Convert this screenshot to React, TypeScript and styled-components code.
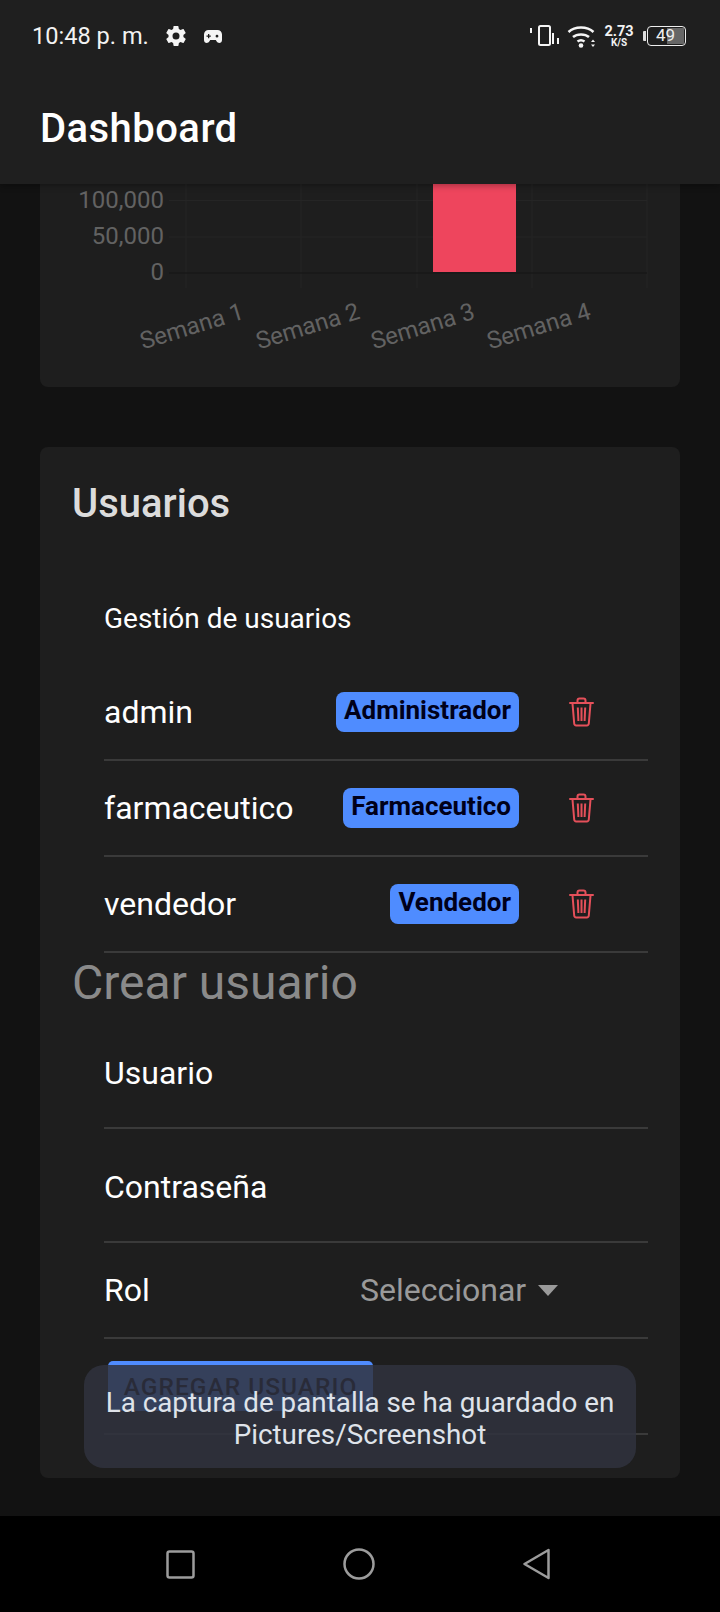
import React from "react";
import styled, { createGlobalStyle } from "styled-components";

const GlobalStyle = createGlobalStyle`
  html, body {
    margin: 0;
    padding: 0;
    background: #121212;
  }
  body {
    font-family: Roboto, "Liberation Sans", sans-serif;
  }
  * {
    box-sizing: border-box;
  }
`;

const Screen = styled.div`
  position: relative;
  width: 720px;
  height: 1612px;
  display: flex;
  flex-direction: column;
  overflow: hidden;
  background: #121212;
`;

const Header = styled.header`
  position: relative;
  z-index: 1;
  height: 184px;
  flex: none;
  background: #1f1f1f;
  color: #fff;
  box-shadow: 0 2px 6px rgba(0, 0, 0, 0.3);
`;

const StatusBar = styled.div`
  height: 72px;
  display: flex;
  align-items: center;
  padding: 0 34px 0 32px;
`;

const Time = styled.span`
  font-size: 23.6px;
  color: #f2f2f2;
  margin-right: 15px;
`;

const StatusRight = styled.div`
  margin-left: auto;
  display: flex;
  align-items: center;
`;

const Speed = styled.div`
  display: flex;
  flex-direction: column;
  align-items: center;
  width: 28px;
  margin: 0 10px 0 9px;
  font-weight: 700;
  font-size: 14.5px;
  line-height: 13px;
  color: #f2f2f2;
  small {
    font-size: 10px;
    line-height: 10px;
  }
`;

const Battery = styled.div`
  position: relative;
  width: 39px;
  height: 20px;
  margin-left: 1px;
  padding-left: 8px;
  border: 1.5px solid #eee;
  border-radius: 4px;
  font-size: 17px;
  line-height: 17px;
  color: #eee;
  span {
    position: relative;
  }
  &::before {
    content: "";
    position: absolute;
    top: 1px;
    right: 1px;
    bottom: 1px;
    width: 17px;
    background: #666;
  }
`;

const BatteryNub = styled.i`
  width: 3px;
  height: 10px;
  border-radius: 1px 0 0 1px;
  background: #ddd;
`;

const Toolbar = styled.div`
  height: 112px;
  padding: 0 40px;
  display: flex;
  align-items: center;
  font-size: 40px;
  font-weight: 500;
  letter-spacing: 0.45px;
`;

const Main = styled.main`
  flex: 1;
  min-height: 0;
  padding: 0 40px;
  overflow: hidden;
`;

const ChartCard = styled.section`
  height: 203px;
  margin-bottom: 60px;
  background: #1e1e1e;
  border-radius: 0 0 8px 8px;
`;

const Chart = styled.svg`
  display: block;
  font-family: Roboto, sans-serif;
  font-size: 24px;
  fill: #626262;
`;

const UsersCard = styled.section`
  height: 1031px;
  background: #1e1e1e;
  border-radius: 8px;
  padding: 34px 32px 0;
`;

const CardTitle = styled.h2`
  margin: 0;
  font-size: 40px;
  line-height: 46px;
  font-weight: 500;
  color: #dcdcdc;
`;

const List = styled.div`
  padding-left: 32px;
`;

const ListHeader = styled.div`
  height: 138px;
  padding-top: 76px;
  font-size: 28px;
  line-height: 32px;
  color: #fff;
`;

const Row = styled.div<{ $height: number; $top?: number }>`
  height: ${({ $height }) => $height}px;
  padding-top: ${({ $top }) => $top ?? 0}px;
  display: flex;
  align-items: center;
  border-bottom: 2px solid #3a3a3a;
`;

const UserName = styled.span`
  flex: 1;
  font-size: 32px;
  color: #fff;
`;

const RoleBadge = styled.span`
  height: 40px;
  padding: 0 8px;
  border-radius: 8px;
  background: #4f8cff;
  color: #00001a;
  font-size: 26px;
  font-weight: 700;
  line-height: 36px;
`;

const TrashButton = styled.button`
  width: 129px;
  height: 40px;
  padding: 0 0 0 50px;
  border: 0;
  background: none;
  display: flex;
  align-items: center;
`;

const SectionTitle = styled.h2`
  margin: 0;
  height: 60px;
  font-size: 48px;
  line-height: 60px;
  font-weight: 400;
  color: #8a8a8a;
`;

const FieldInput = styled.input`
  width: 100%;
  border: 0;
  outline: 0;
  padding: 0;
  background: none;
  font: 400 32px Roboto, sans-serif;
  color: #fff;
  &::placeholder {
    color: #fff;
    opacity: 1;
  }
`;

const FieldLabel = styled.span`
  flex: 1;
  font-size: 32px;
  color: #fff;
`;

const SelectBox = styled.div`
  width: 288px;
  display: flex;
  align-items: center;
  gap: 12px;
  font-size: 32px;
  color: #9a9a9a;
  i {
    width: 0;
    height: 0;
    border-left: 10px solid transparent;
    border-right: 10px solid transparent;
    border-top: 11px solid #9a9a9a;
  }
`;

const AddButton = styled.button`
  width: 265px;
  height: 50px;
  margin-left: 4px;
  border: 0;
  border-radius: 5px;
  background: #4f8cff;
  color: #00001a;
  font: 500 24.5px Roboto, sans-serif;
  letter-spacing: 1px;
  padding: 0;
`;

const Toast = styled.div`
  position: absolute;
  z-index: 2;
  left: 84px;
  top: 1365px;
  width: 552px;
  height: 103px;
  padding: 22px 10px 0;
  border-radius: 20px;
  background: rgba(48, 51, 62, 0.85);
  color: #dfe3ea;
  font-size: 27.8px;
  line-height: 32px;
  text-align: center;
`;

const NavBar = styled.nav`
  height: 96px;
  flex: none;
  background: #000;
  display: flex;
  align-items: center;
  justify-content: center;
  gap: 148px;
  padding: 0 5px 0 0;
`;

const TrashIcon = () => (
  <svg width="25" height="30" viewBox="0 0 25 30" fill="none" stroke="#e5505a" strokeWidth="2">
    <path d="M1 6h23" strokeLinecap="round" />
    <path d="M8.500 5.500V3.500c0-1.200.9-2 2-2h4c1.100 0 2 .8 2 2v2" />
    <path d="M3.500 6.500l1.700 20c.1 1.100 1 1.900 2 1.900h10.600c1 0 1.900-.8 2-1.900l1.700-20" />
    <path d="M8.800 10.500l.6 13.500M12.500 10.500v13.500M16.200 10.500l-.6 13.500" />
  </svg>
);

const USERS = [
  { name: "admin", role: "Administrador" },
  { name: "farmaceutico", role: "Farmaceutico" },
  { name: "vendedor", role: "Vendedor" },
];

const GRID_X = [186, 301, 417, 532, 647];
const GRID_Y = [200.5, 237];
const WEEKS = [
  { label: "Semana 1", x: 194 },
  { label: "Semana 2", x: 310 },
  { label: "Semana 3", x: 425 },
  { label: "Semana 4", x: 541 },
];

// chart is offset by the card's left edge and the header's bottom
const SalesChart = () => (
  <Chart width="640" height="203" viewBox="40 184 640 203">
    {GRID_X.map((x) => (
      <line key={x} x1={x} x2={x} y1="184" y2="288" stroke="#252525" strokeWidth="1" />
    ))}
    {GRID_Y.map((y) => (
      <line key={y} x1="169" x2="647" y1={y} y2={y} stroke="#252525" strokeWidth="1" />
    ))}
    <line x1="169" x2="647" y1="273" y2="273" stroke="#191919" strokeWidth="1.5" />
    <rect x="433" y="184" width="83" height="88" fill="#ee455d" />
    <text x="164" y="208" textAnchor="end">100,000</text>
    <text x="164" y="244" textAnchor="end">50,000</text>
    <text x="164" y="280" textAnchor="end">0</text>
    {WEEKS.map((w) => (
      <text key={w.label} textAnchor="middle" transform={`translate(${w.x} 334) rotate(-17)`}>
        {w.label}
      </text>
    ))}
  </Chart>
);

export default function App() {
  return (
    <Screen>
      <GlobalStyle />
      <Header>
        <StatusBar>
          <Time>10:48 p. m.</Time>
          <svg width="24" height="24" viewBox="0 0 24 24" fill="#f5f5f5">
            <path d="M19.400 13c.04-.33.06-.66.06-1s-.02-.67-.06-1l2.100-1.650c.19-.15.24-.42.12-.64l-2-3.460c-.12-.22-.39-.3-.61-.22l-2.490 1c-.52-.4-1.080-.73-1.690-.98l-.38-2.650A.49.49 0 0 0 14 2h-4c-.25 0-.46.18-.49.42l-.38 2.650c-.61.25-1.170.59-1.690.98l-2.490-1a.5.5 0 0 0-.61.22l-2 3.460c-.13.22-.07.49.12.64L4.570 11c-.04.33-.07.67-.07 1s.03.67.07 1l-2.110 1.650c-.19.15-.24.42-.12.64l2 3.460c.12.22.39.3.61.22l2.490-1c.52.4 1.080.73 1.690.98l.38 2.650c.03.24.24.42.49.42h4c.25 0 .46-.18.49-.42l.38-2.650c.61-.25 1.170-.59 1.690-.98l2.490 1c.23.08.49 0 .61-.22l2-3.460c.12-.22.07-.49-.12-.64L19.400 13zM12 15.500a3.500 3.500 0 1 1 0-7 3.500 3.500 0 0 1 0 7z" />
          </svg>
          <svg width="18" height="13" viewBox="0 0 18 13" style={{ marginLeft: 16 }}>
            <path fill="#f5f5f5" fillRule="evenodd" d="M4.500 0h9C16 0 18 2 18 4.500v5.500c0 1.800-1.200 3-2.800 3-1 0-1.800-.5-2.300-1.200L11.800 10H6.200l-1.100 1.800C4.600 12.500 3.800 13 2.800 13 1.200 13 0 11.800 0 10V4.500C0 2 2 0 4.500 0zM4 4v1.500H2.500v1.300H4v1.500h1.300V6.800h1.500V5.500H5.300V4H4zm9 .8a1.400 1.400 0 1 0 0 2.800 1.400 1.400 0 0 0 0-2.800z" />
          </svg>
          <StatusRight>
            <svg width="30" height="22" viewBox="0 0 30 22" fill="none" stroke="#f5f5f5">
              <rect x="9" y="1" width="11" height="19" rx="1.500" strokeWidth="2" />
              <path d="M1 3v5M23 8v11M28 13v6" strokeWidth="2" />
            </svg>
            <svg width="29" height="24" viewBox="0 0 29 24" fill="none" stroke="#f5f5f5" strokeWidth="2.500" style={{ marginLeft: 7 }}>
              <path d="M1.500 8C8 2 20 2 26.500 8" />
              <path d="M6 13c4-3.500 12-3.500 16 0" />
              <path d="M10.500 17.500c2-1.500 5-1.500 7 0" />
              <circle cx="14" cy="21.500" r="2.300" fill="#f5f5f5" stroke="none" />
              <path d="M26 15.500l-2 2.500h4zM26 23l-2-2.500h4z" fill="#f5f5f5" stroke="none" />
            </svg>
            <Speed>
              2.73
              <small>K/S</small>
            </Speed>
            <BatteryNub />
            <Battery>
              <span>49</span>
            </Battery>
          </StatusRight>
        </StatusBar>
        <Toolbar>Dashboard</Toolbar>
      </Header>
      <Main>
        <ChartCard>
          <SalesChart />
        </ChartCard>
        <UsersCard>
          <CardTitle>Usuarios</CardTitle>
          <List>
            <ListHeader>Gestión de usuarios</ListHeader>
            {USERS.map((u) => (
              <Row key={u.name} $height={96}>
                <UserName>{u.name}</UserName>
                <RoleBadge>{u.role}</RoleBadge>
                <TrashButton aria-label="Eliminar">
                  <TrashIcon />
                </TrashButton>
              </Row>
            ))}
          </List>
          <SectionTitle>Crear usuario</SectionTitle>
          <List>
            <Row $height={116} $top={6}>
              <FieldInput placeholder="Usuario" />
            </Row>
            <Row $height={114} $top={4}>
              <FieldInput placeholder="Contraseña" />
            </Row>
            <Row $height={96}>
              <FieldLabel>Rol</FieldLabel>
              <SelectBox>
                Seleccionar
                <i />
              </SelectBox>
            </Row>
            <Row $height={96}>
              <AddButton>AGREGAR USUARIO</AddButton>
            </Row>
          </List>
        </UsersCard>
      </Main>
      <NavBar>
        <svg width="29" height="29" viewBox="0 0 29 29" fill="none" stroke="#9c9c9c" strokeWidth="2.500">
          <rect x="1.500" y="1.500" width="26" height="26" rx="2" />
        </svg>
        <svg width="32" height="32" viewBox="0 0 32 32" fill="none" stroke="#9c9c9c" strokeWidth="2.500">
          <circle cx="16" cy="16" r="14.500" />
        </svg>
        <svg width="27" height="32" viewBox="0 0 27 32" fill="none" stroke="#9c9c9c" strokeWidth="2.500" strokeLinejoin="round">
          <path d="M1.500 16L25.500 2v28z" />
        </svg>
      </NavBar>
      <Toast>
        La captura de pantalla se ha guardado en
        <br />
        Pictures/Screenshot
      </Toast>
    </Screen>
  );
}
